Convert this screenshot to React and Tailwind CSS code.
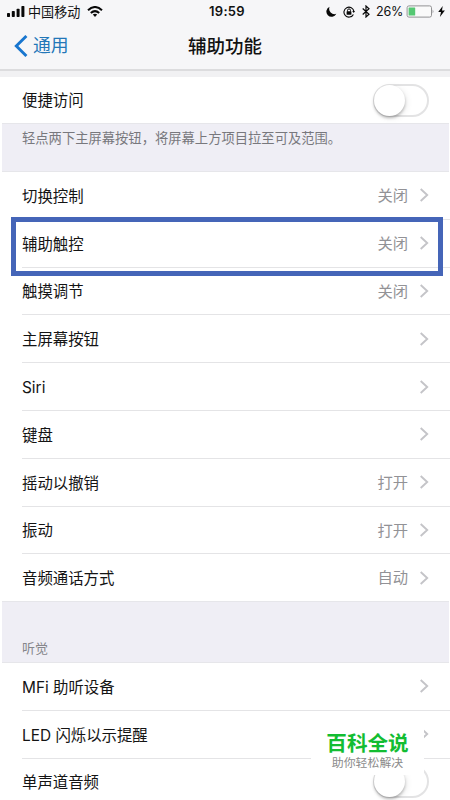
const Chevron = () => (
  <svg className="ml-[11px] h-[14px] w-[9px] shrink-0" viewBox="0 0 9 14" fill="none" stroke="#c4c4c8" strokeWidth="1.9">
    <path d="M0.7 1 L7.2 7 L0.7 13" />
  </svg>
);

const Toggle = () => (
  <div className="flex h-[33px] w-[56px] shrink-0 items-center rounded-full border-2 border-[#e3e3e4] bg-white">
    <div className="-ml-px size-[31px] rounded-full bg-white shadow-[0_2px_3px_rgba(0,0,0,0.26),2px_2px_6px_rgba(0,0,0,0.08)]" />
  </div>
);

const Row = ({ label, value, toggle, last }) => (
  <div className="h-[47.8px] pl-[22px]">
    <div className={`flex h-full items-center border-b pr-[21px] ${last ? "border-transparent" : "border-[#e4e4e6]"}`}>
      <span className="grow pt-[2px] text-[15.4px] text-[#141414]">{label}</span>
      {value && <span className="mr-px pt-[2px] text-[15.3px] text-[#929296]">{value}</span>}
      {toggle ? <Toggle /> : <Chevron />}
    </div>
  </div>
);

const StatusBar = () => (
  <div className="flex h-[23px] items-center text-[#111]">
    <div className="flex w-[209px] items-center pl-[7px]">
      <svg className="h-[11px] w-[18px]" viewBox="0 0 18 11" fill="#080808">
        <rect x="0" y="7" width="3" height="4" rx="0.7" />
        <rect x="4.8" y="5" width="3" height="6" rx="0.7" />
        <rect x="9.6" y="2.7" width="3" height="8.3" rx="0.7" />
        <rect x="14.4" y="0" width="3" height="11" rx="0.7" />
      </svg>
      <span className="ml-[3px] text-[13.1px] leading-5">中国移动</span>
      <svg className="ml-[7px] h-[11px] w-[16px]" viewBox="0 0 16 11" fill="none" stroke="#080808" strokeWidth="2">
        <path d="M1 4.2 Q8 -2.2 15 4.2" />
        <path d="M3.8 7 Q8 3.2 12.2 7" />
        <path d="M5.8 8.6 Q8 6.8 10.2 8.6 L8 11Z" fill="#080808" stroke="none" />
      </svg>
    </div>
    <span className="w-[117px] pt-px text-[13px] font-semibold tracking-[0.3px]">19:59</span>
    <svg className="h-[11px] w-[11px]" viewBox="0 0 11 11" fill="#080808">
      <path d="M3.6 0.8 A5.2 5.2 0 1 0 10.3 7.8 A5.3 5.3 0 0 1 3.6 0.8Z" />
    </svg>
    <svg className="ml-[6px] h-[12px] w-[12px]" viewBox="0 0 12 12" fill="none" stroke="#080808">
      <path d="M10.4 8.4 A5 5 0 1 1 10.9 5.4" strokeWidth="1.1" />
      <path d="M9.2 5 H12 L10.8 7Z" fill="#080808" stroke="none" />
      <path d="M4.5 5.6 V4.4 A1.5 1.5 0 0 1 7.5 4.4 V5.6" />
      <rect x="3.6" y="5.2" width="4.8" height="3.6" rx="0.5" fill="#080808" stroke="none" />
    </svg>
    <svg className="ml-[7px] h-[13px] w-[8px]" viewBox="0 0 8 13" fill="none" stroke="#080808" strokeWidth="1.2">
      <path d="M0.7 3.5 L7 9.2 L4 12 V1 L7 3.8 L0.7 9.5" />
    </svg>
    <span className="ml-[6px] w-[30px] pt-px text-[12.6px] tracking-[-0.2px]">26%</span>
    <svg className="h-[13px] w-[28px]" viewBox="0 0 28 13" fill="none">
      <rect x="1.1" y="0.9" width="24.4" height="11.2" rx="1.8" stroke="#929294" fill="#fafafa" />
      <rect x="2.6" y="2.4" width="6.6" height="8.2" rx="0.5" fill="#55c873" />
      <path d="M26.6 4.4 Q28.2 6.5 26.6 8.6Z" fill="#929294" />
    </svg>
    <svg className="ml-[4px] h-[11px] w-[7px]" viewBox="0 0 7 11" fill="#080808">
      <path d="M4.7 0 L0.2 6 H3 L1.9 11 L6.9 4.5 H4Z" />
    </svg>
  </div>
);

export default function App() {
  return (
    <div className="relative h-[800px] w-[450px] overflow-hidden bg-white font-['Inter','Noto_Sans_CJK_SC',sans-serif]">
      <header className="h-[71px] border-b-2 border-[#dcdcde] bg-[#f6f6f8]">
        <StatusBar />
        <div className="flex h-[46px] items-center">
          <div className="flex w-[188px] items-center pl-[14px] text-[#2377b8]">
            <svg className="h-[22px] w-[14px]" viewBox="0 0 14 22" fill="none" stroke="#1876cf" strokeWidth="2.9">
              <path d="M12.4 1 L2.3 11 L12.4 21" />
            </svg>
            <span className="ml-[5px] pt-px text-[17.8px]">通用</span>
          </div>
          <h1 className="pt-[2px] text-[18.5px] font-medium text-[#111]">辅助功能</h1>
        </div>
      </header>
      <div className="h-[6px] bg-[#f1f1f3]" />
      <section className="flex h-[46px] items-center pr-[21px] pl-[22px]">
        <span className="grow pt-[2px] text-[15.4px] text-[#141414]">便捷访问</span>
        <Toggle />
      </section>
      <div className="mr-px ml-[2px] h-[49px] border-y border-[#e6e6ea] bg-[#efeef5] pt-[4px] pl-[20px] text-[13.3px] leading-5 text-[#78787d]">
        轻点两下主屏幕按钮，将屏幕上方项目拉至可及范围。
      </div>
      <section className="h-[429px]">
        <Row label="切换控制" value="关闭" />
        <Row label="辅助触控" value="关闭" />
        <Row label="触摸调节" value="关闭" />
        <Row label="主屏幕按钮" />
        <Row label="Siri" />
        <Row label="键盘" />
        <Row label="摇动以撤销" value="打开" />
        <Row label="振动" value="打开" />
        <Row label="音频通话方式" value="自动" last />
      </section>
      <div className="relative mr-px ml-[2px] h-[62px] border-y border-[#e6e6ea] bg-[#efeef5] pt-[36px] pl-[20px] text-[13px] leading-5 text-[#86868b]">
        听觉
      </div>
      <section>
        <Row label="MFi 助听设备" />
        <Row label="LED 闪烁以示提醒" />
        <Row label="单声道音频" toggle last />
      </section>
      <div className="absolute top-[217px] left-[11px] h-[59px] w-[432px] border-[5px] border-[#4565b8]" />
      <div className="absolute top-[721px] left-[311px] flex h-[54px] w-[113px] flex-col items-center bg-white pt-[11px]">
        <span className="text-[20.6px] leading-6 font-bold text-[#13bd32]">百科全说</span>
        <span className="-mt-px text-[11.9px] leading-4 text-[#8b8b8b]">助你轻松解决</span>
      </div>
    </div>
  );
}
